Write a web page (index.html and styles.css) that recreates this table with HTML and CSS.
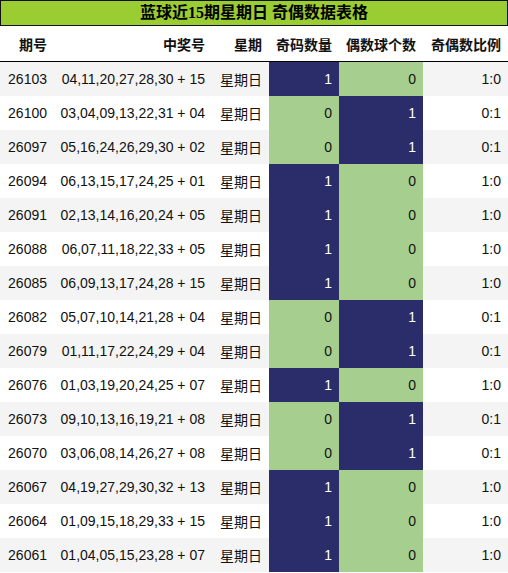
FILE: index.html
```html
<!DOCTYPE html>
<html lang="zh">
<head>
<meta charset="utf-8">
<link rel="stylesheet" href="styles.css">
</head>
<body>
<div class="title">蓝球近15期星期日 奇偶数据表格</div>
<table class="data">
<colgroup>
<col class="c1"><col class="c2"><col class="c3"><col class="c4"><col class="c5"><col class="c6">
</colgroup>
<thead>
<tr><th>期号</th><th>中奖号</th><th>星期</th><th>奇码数量</th><th>偶数球个数</th><th>奇偶数比例</th></tr>
</thead>
<tbody>
<tr><td>26103</td><td>04,11,20,27,28,30 + 15</td><td>星期日</td><td class="b">1</td><td class="g">0</td><td>1:0</td></tr>
<tr><td>26100</td><td>03,04,09,13,22,31 + 04</td><td>星期日</td><td class="g">0</td><td class="b">1</td><td>0:1</td></tr>
<tr><td>26097</td><td>05,16,24,26,29,30 + 02</td><td>星期日</td><td class="g">0</td><td class="b">1</td><td>0:1</td></tr>
<tr><td>26094</td><td>06,13,15,17,24,25 + 01</td><td>星期日</td><td class="b">1</td><td class="g">0</td><td>1:0</td></tr>
<tr><td>26091</td><td>02,13,14,16,20,24 + 05</td><td>星期日</td><td class="b">1</td><td class="g">0</td><td>1:0</td></tr>
<tr><td>26088</td><td>06,07,11,18,22,33 + 05</td><td>星期日</td><td class="b">1</td><td class="g">0</td><td>1:0</td></tr>
<tr><td>26085</td><td>06,09,13,17,24,28 + 15</td><td>星期日</td><td class="b">1</td><td class="g">0</td><td>1:0</td></tr>
<tr><td>26082</td><td>05,07,10,14,21,28 + 04</td><td>星期日</td><td class="g">0</td><td class="b">1</td><td>0:1</td></tr>
<tr><td>26079</td><td>01,11,17,22,24,29 + 04</td><td>星期日</td><td class="g">0</td><td class="b">1</td><td>0:1</td></tr>
<tr><td>26076</td><td>01,03,19,20,24,25 + 07</td><td>星期日</td><td class="b">1</td><td class="g">0</td><td>1:0</td></tr>
<tr><td>26073</td><td>09,10,13,16,19,21 + 08</td><td>星期日</td><td class="g">0</td><td class="b">1</td><td>0:1</td></tr>
<tr><td>26070</td><td>03,06,08,14,26,27 + 08</td><td>星期日</td><td class="g">0</td><td class="b">1</td><td>0:1</td></tr>
<tr><td>26067</td><td>04,19,27,29,30,32 + 13</td><td>星期日</td><td class="b">1</td><td class="g">0</td><td>1:0</td></tr>
<tr><td>26064</td><td>01,09,15,18,29,33 + 15</td><td>星期日</td><td class="b">1</td><td class="g">0</td><td>1:0</td></tr>
<tr><td>26061</td><td>01,04,05,15,23,28 + 07</td><td>星期日</td><td class="b">1</td><td class="g">0</td><td>1:0</td></tr>
</tbody>
</table>
</body>
</html>
```

FILE: styles.css
```css
html, body {
  margin: 0;
  padding: 0;
  background: #ffffff;
}
body {
  width: 508px;
  font-family: "Liberation Sans", "Noto Sans CJK SC", sans-serif;
  color: #111111;
}
.title {
  box-sizing: border-box;
  height: 26px;
  background: #9acd32;
  border: 1px solid #111111;
  font-family: "Liberation Serif", "Noto Sans CJK SC", serif;
  font-weight: bold;
  font-size: 16px;
  line-height: 24px;
  text-align: center;
  color: #000000;
}
.data {
  width: 508px;
  border-collapse: collapse;
  table-layout: fixed;
  font-size: 14px;
}
.c1 { width: 56px; }
.c2 { width: 156px; }
.c3 { width: 57px; }
.c4 { width: 70px; }
.c5 { width: 84px; }
.c6 { width: 85px; }
.data th {
  height: 35px;
  padding: 0 7px 0 0;
  text-align: right;
  font-weight: bold;
  font-family: "Noto Sans CJK SC", sans-serif;
  border-bottom: 1px solid #000000;
  color: #111111;
}
.data td {
  height: 34px;
  padding: 0 7px 0 0;
  text-align: right;
  white-space: nowrap;
}
.data th:first-child,
.data td:first-child {
  padding-right: 9px;
}
.data td:nth-child(3) {
  font-family: "Noto Sans CJK SC", sans-serif;
}
.data tbody tr:nth-child(odd) {
  background: #f4f4f4;
}
.data td.b {
  background: #2b2d6b;
  color: #ffffff;
}
.data td.g {
  background: #a6cf8f;
  color: #111111;
}
```
